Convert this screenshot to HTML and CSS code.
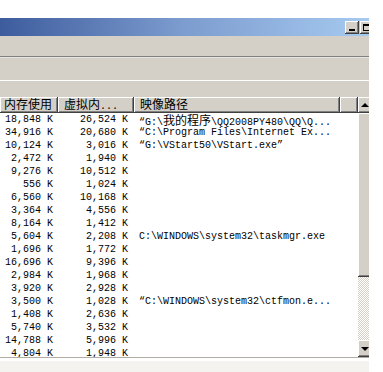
FILE: index.html
```html
<!DOCTYPE html>
<html>
<head>
<meta charset="utf-8">
<link rel="stylesheet" href="styles.css">
</head>
<body>
<div class="window">
  <div class="titlebar">
    <span class="cbtn min"><span class="min-glyph"></span></span>
    <span class="cbtn max"><span class="max-glyph"></span></span>
  </div>
  <div class="menubar"></div>
  <div class="tabstrip"></div>
  <div class="pane">
    <div class="listview">
      <div class="lv-main">
        <div class="lv-header">
          <div class="hcell c1"><span class="cj">内存使用</span></div>
          <div class="hcell c2"><span class="cj">虚拟内</span>...</div>
          <div class="hcell c3"><span class="cj">映像路径</span></div>
          <div class="hcell c4"></div>
        </div>
        <div class="lv-body">
          <div class="row"><span class="c1">18,848 K</span><span class="c2">26,524 K</span><span class="c3">“G:\<span class="cj">我的程序</span>\QQ2008PY480\QQ\Q...</span></div>
          <div class="row"><span class="c1">34,916 K</span><span class="c2">20,680 K</span><span class="c3">“C:\Program Files\Internet Ex...</span></div>
          <div class="row"><span class="c1">10,124 K</span><span class="c2">3,016 K</span><span class="c3">“G:\VStart50\VStart.exe”</span></div>
          <div class="row"><span class="c1">2,472 K</span><span class="c2">1,940 K</span><span class="c3"></span></div>
          <div class="row"><span class="c1">9,276 K</span><span class="c2">10,512 K</span><span class="c3"></span></div>
          <div class="row"><span class="c1">556 K</span><span class="c2">1,024 K</span><span class="c3"></span></div>
          <div class="row"><span class="c1">6,560 K</span><span class="c2">10,168 K</span><span class="c3"></span></div>
          <div class="row"><span class="c1">3,364 K</span><span class="c2">4,556 K</span><span class="c3"></span></div>
          <div class="row"><span class="c1">8,164 K</span><span class="c2">1,412 K</span><span class="c3"></span></div>
          <div class="row"><span class="c1">5,604 K</span><span class="c2">2,208 K</span><span class="c3">C:\WINDOWS\system32\taskmgr.exe</span></div>
          <div class="row"><span class="c1">1,696 K</span><span class="c2">1,772 K</span><span class="c3"></span></div>
          <div class="row"><span class="c1">16,696 K</span><span class="c2">9,396 K</span><span class="c3"></span></div>
          <div class="row"><span class="c1">2,984 K</span><span class="c2">1,968 K</span><span class="c3"></span></div>
          <div class="row"><span class="c1">3,920 K</span><span class="c2">2,928 K</span><span class="c3"></span></div>
          <div class="row"><span class="c1">3,500 K</span><span class="c2">1,028 K</span><span class="c3">“C:\WINDOWS\system32\ctfmon.e...</span></div>
          <div class="row"><span class="c1">1,408 K</span><span class="c2">2,636 K</span><span class="c3"></span></div>
          <div class="row"><span class="c1">5,740 K</span><span class="c2">3,532 K</span><span class="c3"></span></div>
          <div class="row"><span class="c1">14,788 K</span><span class="c2">5,996 K</span><span class="c3"></span></div>
          <div class="row"><span class="c1">4,804 K</span><span class="c2">1,948 K</span><span class="c3"></span></div>
        </div>
      </div>
      <div class="vscroll">
        <div class="sbtn up"><span class="arrow-up"></span></div>
        <div class="thumb"></div>
        <div class="track"></div>
        <div class="sbtn down"><span class="arrow-down"></span></div>
      </div>
    </div>
  </div>
  <div class="status"></div>
</div>
</body>
</html>
```
FILE: styles.css
```css
html, body {
  margin: 0;
  padding: 0;
  background: #ffffff;
}
body {
  padding-top: 18px;
  font-family: "Liberation Mono", "Noto Sans CJK SC", monospace;
  font-size: 10px;
  color: #000;
}
.cj {
  font-family: "Noto Sans CJK SC", sans-serif;
  font-size: 12px;
  display: inline-block;
  height: 13px;
  line-height: 13px;
}
.window {
  width: 369px;
  overflow: hidden;
  background: #d4d0c8;
}
.titlebar {
  height: 18px;
  background: linear-gradient(to right, #3d5c9d 0%, #7d9ccf 50%, #a6caf0 100%);
  display: flex;
  align-items: center;
  padding-left: 345px;
  gap: 1px;
}
.cbtn {
  flex: none;
  width: 14px;
  height: 13px;
  box-sizing: border-box;
  background: #d4d0c8;
  box-shadow: inset -1px -1px #404040, inset 1px 1px #ffffff, inset -2px -2px #808080;
  display: flex;
  align-items: flex-end;
  justify-content: center;
}
.min-glyph {
  width: 6px;
  height: 2px;
  background: #000;
  margin-bottom: 3px;
}
.max-glyph {
  width: 9px;
  height: 7px;
  box-sizing: border-box;
  border: 1px solid #000;
  border-top-width: 2px;
  margin-bottom: 3px;
}
.menubar {
  height: 20px;
  border-bottom: 1px solid #808080;
}
.tabstrip {
  height: 22px;
  border-top: 1px solid #e8e6e0;
  border-bottom: 1px solid #ffffff;
}
.pane {
  padding-top: 16px;
}
.listview {
  display: flex;
  height: 260px;
  background: #ffffff;
}
.lv-main {
  width: 358px;
  flex: none;
  display: flex;
  flex-direction: column;
}
.lv-header {
  height: 16px;
  display: flex;
  flex: none;
}
.hcell {
  height: 16px;
  box-sizing: border-box;
  background: #d4d0c8;
  box-shadow: inset -1px -1px #404040, inset 1px 1px #ffffff, inset -2px -2px #808080;
  line-height: 16px;
  white-space: nowrap;
  padding-left: 6px;
}
.hcell.c1 { width: 58px; padding-left: 4px; }
.hcell.c2 { width: 76px; }
.hcell.c3 { width: 206px; }
.hcell.c4 { width: 18px; }
.lv-body {
  flex: 1;
  overflow: hidden;
  margin-top: -3px;
  padding-top: 3px;
}
.row {
  display: flex;
  height: 13px;
  line-height: 13px;
  white-space: nowrap;
}
.row .c1 {
  width: 58px;
  box-sizing: border-box;
  text-align: right;
  padding-right: 5px;
  flex: none;
}
.row .c2 {
  width: 76px;
  box-sizing: border-box;
  text-align: right;
  padding-right: 6px;
  flex: none;
}
.row .c3 {
  padding-left: 5px;
  flex: none;
}
.vscroll {
  width: 13px;
  flex: none;
  display: flex;
  flex-direction: column;
}
.sbtn {
  height: 16px;
  flex: none;
  box-sizing: border-box;
  background: #d4d0c8;
  box-shadow: inset -1px -1px #404040, inset 1px 1px #ffffff, inset -2px -2px #808080;
  display: flex;
  align-items: center;
  justify-content: center;
}
.down {
  height: 17px;
}
.arrow-up {
  width: 0;
  height: 0;
  border-left: 4px solid transparent;
  border-right: 4px solid transparent;
  border-bottom: 4px solid #000;
}
.arrow-down {
  width: 0;
  height: 0;
  border-left: 4px solid transparent;
  border-right: 4px solid transparent;
  border-top: 4px solid #000;
}
.thumb {
  height: 164px;
  flex: none;
  box-sizing: border-box;
  background: #d4d0c8;
  box-shadow: inset -1px -1px #404040, inset 1px 1px #ffffff, inset -2px -2px #808080;
}
.track {
  flex: 1;
  background-color: #ffffff;
  background-image: conic-gradient(#ffffff 25%, #d4d0c8 0 50%, #ffffff 0 75%, #d4d0c8 0);
  background-size: 2px 2px;
}
.status {
  height: 15px;
  border-top: 1px solid #b0aca4;
  background: #f4f3f0;
  box-shadow: inset 0 3px #ffffff;
}
```
